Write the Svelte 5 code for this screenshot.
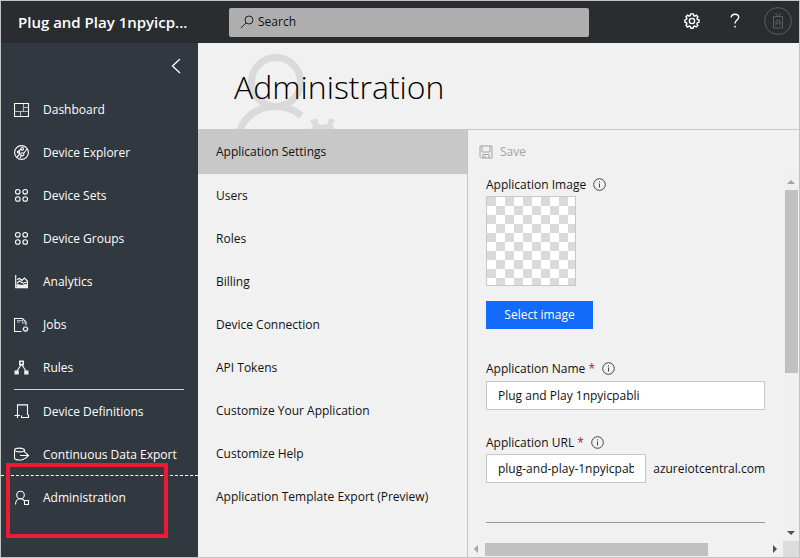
<script>
  const primary = ['Dashboard', 'Device Explorer', 'Device Sets', 'Device Groups', 'Analytics', 'Jobs', 'Rules'];
  const secondary = ['Device Definitions', 'Continuous Data Export', 'Administration'];
  const sections = [
    'Application Settings',
    'Users',
    'Roles',
    'Billing',
    'Device Connection',
    'API Tokens',
    'Customize Your Application',
    'Customize Help',
    'Application Template Export (Preview)'
  ];
  let current = $state('Application Settings');
  let appName = $state('Plug and Play 1npyicpabli');
  let appUrl = $state('plug-and-play-1npyicpabli');
</script>

{#snippet info(label)}
  <svg class="info" viewBox="0 0 13 13" role="img" aria-label={label}>
    <circle cx="6.5" cy="6.5" r="5.8" />
    <path d="M6.5 5.5V9.5M6.5 3.3V4.4" />
  </svg>
{/snippet}

{#snippet glyph(name)}
  <svg class="glyph" viewBox="0 0 16 16" aria-hidden="true">
    {#if name === 'Dashboard'}
      <path class="dim" d="M.5 9.5h14M9.5 1.5v8M9.5 5.5h5M6.5 9.5v5" />
      <path d="M.5 1.5h14v13h-14z" />
    {:else if name === 'Device Explorer'}
      <circle cx="7.5" cy="7.5" r="6.9" />
      <path d="M3 12 5.5 9.5 5 6l2-2M6 13l1.5-2.5M9.5 8.5 13 4" />
      <circle cx="8.2" cy="3.8" r="1.3" />
      <circle cx="8.3" cy="9.3" r="1.6" />
      <circle cx="4.4" cy="7" r="1" />
    {:else if name === 'Device Sets' || name === 'Device Groups'}
      <circle cx="3.8" cy="3.8" r="2.3" />
      <circle cx="11.2" cy="3.8" r="2.3" />
      <circle cx="3.8" cy="11" r="2.3" />
      <circle cx="11.2" cy="11" r="2.3" />
    {:else if name === 'Analytics'}
      <path d="M1.7 1v12.8H14" />
      <path class="fill" d="M2.500 9.500 5 10.500l3 .6 3-1 3 .3V14H2.500z" />
      <path d="M3 5.5 5.5 4.5 8 6.5 10.5 4 13.4 7V11M3 9l2.5-2L9 9.2 13 8" />
    {:else if name === 'Jobs'}
      <path d="M7.5 14.5h-7v-13h8l3.5 3.5v3" />
      <path class="dim" d="M3 3.5h5.5v2.5h3M3 5h3" />
      <circle cx="11.5" cy="12" r="2" />
      <path class="dim" d="M11.5 8.8v1M11.5 14.2v1M8.3 12h1M13.7 12h1M9.3 9.8l.7.7M13 13.500l.7.7M13.700 9.800l-.7.7M9.300 14.200l.7-.7" />
    {:else if name === 'Rules'}
      <path d="M7 5 3 11M8 5l4 6" />
      <path class="fill" fill-rule="evenodd" d="M5 .5h5v5H5zM6.700 2v2h1.700V2z" />
      <path class="fill" d="M.5 10.500h4.300v4H.5zM10.200 10.500h4.300v4h-4.300z" />
    {:else if name === 'Device Definitions'}
      <path d="M3.500 8.500V.9h10v10M3.500 8.500v5.500M.5 11.500h5.500M7 13.500h7.500v-3M7.500 13.500v-2" />
    {:else if name === 'Continuous Data Export'}
      <ellipse cx="5.500" cy="3" rx="5" ry="1.900" />
      <path d="M.5 3v8c0 1.200 2.200 2 5 2s5-.8 5-2M10.500 3v2.500M6 8.500h8.500M11.200 5.300l3.300 3.200-3.300 3.200" />
    {:else}
      <circle cx="6.500" cy="5" r="3.800" />
      <path d="M1.500 14.500c0-3.200 2-5.700 5-5.700 1.800 0 3 .8 3.900 2.100" />
      <path d="M10.500 10.500h4v4h-4z" />
    {/if}
  </svg>
{/snippet}

<div class="app">
  <header class="topbar">
    <div class="brand">Plug and Play 1npyicp...</div>
    <div class="search">
      <svg viewBox="0 0 14 14" aria-hidden="true"><circle cx="9" cy="5" r="4" /><path d="M6 8 .8 13" /></svg>
      <input type="text" placeholder="Search" aria-label="Search" />
    </div>
    <div class="tools">
      <button aria-label="Settings">
        <svg class="gear" viewBox="0 0 16 16">
          <path d="M6.700.9h2.600l.4 1.800 1.100.5 1.600-1 1.500 1.600-1 1.600.5 1.100 1.600.4v2.300l-1.600.5-.5 1.200.9 1.600-1.600 1.500-1.600-.9-1.100.5-.4 1.700H6.800l-.5-1.700-1.200-.5-1.600 1-1.500-1.600.9-1.600-.5-1.200-1.500-.4V6.900l1.500-.5.5-1.100-.9-1.600 1.500-1.600 1.600 1 1.200-.5z" />
          <circle cx="8" cy="8" r="2.600" />
        </svg>
      </button>
      <button aria-label="Help">
        <svg class="help" viewBox="0 0 12 16"><path d="M2.200 4.500C2.200 2.500 3.800 1.200 6 1.200s3.700 1.200 3.700 3.100C9.700 7.200 6 7 6 10.500M6 12.700V14.600" /></svg>
      </button>
      <button class="avatar" aria-label="Account">
        <svg viewBox="0 0 28 28">
          <circle cx="14" cy="14" r="13.400" />
          <path d="M9.500 9.500h9v11.500h-9zM11.500 6l2.500 4M16.500 6 14 10M12 18.500v-4.500l1-1h2l1 1v4.500M12 16h4" />
        </svg>
      </button>
    </div>
  </header>

  <div class="body">
    <nav class="sidebar" aria-label="Main">
      <button class="collapse" aria-label="Collapse menu">
        <svg viewBox="0 0 10 16"><path d="M9 1 1.500 8 9 15" /></svg>
      </button>
      <ul class="primary">
        {#each primary as item}
          <li><a href="#main">{@render glyph(item)}{item}</a></li>
        {/each}
      </ul>
      <ul class="secondary">
        {#each secondary as item}
          <li class:focused={item === 'Administration'}><a href="#main">{@render glyph(item)}{item}</a></li>
        {/each}
      </ul>
      <div class="callout"></div>
    </nav>

    <main id="main">
      <div class="title">
        <svg class="backdrop" viewBox="0 0 110 76" aria-hidden="true">
          <circle cx="48" cy="29" r="24.500" />
          <path d="M11.500 79C16 63 30 53.500 48 53.500c10 0 18 3 25.500 9" />
          <path class="cog" d="M82 67.500 88.700 65.300 91.300 72 99.300 71.300 101.300 65.300 107 67 104.300 72 107 76H82.700L85.300 73z" />
        </svg>
        <h1>Administration</h1>
      </div>
      <div class="columns">
        <ul class="sections">
          {#each sections as section}
            <li class:active={section === current}>
              <a href="#settings" onclick={() => (current = section)}>{section}</a>
            </li>
          {/each}
        </ul>
        <section class="panel" id="settings">
          <button class="save" disabled>
            <svg viewBox="0 0 14 14"><path d="M1 1h12v12H2.500L1 11.500zM3 1v6h8V1M4 13V9.500h6V13M6 11v2" /></svg>
            Save
          </button>
          <div class="scroller">
            <form onsubmit={(e) => e.preventDefault()}>
              <div class="label">Application Image {@render info('About the image')}</div>
              <div class="preview"></div>
              <button class="select">Select image</button>
              <div class="label"><label for="name">Application Name <b>*</b></label>{@render info('About the name')}</div>
              <input id="name" type="text" bind:value={appName} />
              <div class="label"><label for="url">Application URL <b>*</b></label>{@render info('About the URL')}</div>
              <div class="url"><input id="url" type="text" bind:value={appUrl} /><span>azureiotcentral.com</span></div>
              <hr />
            </form>
            <div class="vbar" aria-hidden="true"><i class="up"></i><div></div><i class="down"></i></div>
            <div class="hbar" aria-hidden="true"><i class="left"></i><div></div><i class="right"></i></div>
            <div class="corner"></div>
          </div>
        </section>
      </div>
    </main>
  </div>
</div>

<style>
  :global(body) { margin: 0; }
  .app, .app * { box-sizing: border-box; }
  .app {
    display: flex;
    flex-direction: column;
    min-height: 100vh;
    border: 1px solid #c3c3c3;
    background: #f1f1f1;
    color: #111;
    font: 12px/20px "Open Sans", "Noto Sans", sans-serif;
  }
  button, input { font: inherit; color: inherit; }
  button { border: 0; background: none; padding: 0; }
  a { color: inherit; text-decoration: none; }
  ul { list-style: none; margin: 0; padding: 0; }
  svg { fill: none; stroke: currentColor; stroke-width: 1; flex: none; display: block; }

  .topbar { display: flex; align-items: center; height: 42px; background: #292d30; color: #fff; }
  .brand { width: 228px; padding-left: 17px; font-size: 15px; font-weight: 600; white-space: nowrap; }
  .search {
    flex: 0 1 360px;
    height: 29px;
    display: flex;
    align-items: center;
    gap: 4px;
    padding-left: 11px;
    border-radius: 2px;
    background: #aeaeae;
    color: #222;
  }
  .search svg { width: 14px; height: 14px; }
  .search input { flex: 1; min-width: 0; border: 0; padding: 0; background: none; outline: 0; }
  .search input::placeholder { color: #111; opacity: 1; }
  .tools { display: flex; align-items: center; gap: 15px; margin-left: auto; padding: 0 7px 3px 0; }
  .tools button { display: flex; justify-content: center; width: 28px; }
  .gear { width: 16px; height: 16px; stroke-width: 1.4; }
  .help { width: 12px; height: 16px; stroke-width: 1.4; }
  .tools .avatar { color: #5b5e61; }
  .avatar svg { width: 28px; height: 28px; }

  .body { flex: 1; display: flex; }
  .sidebar { position: relative; flex: none; width: 197px; background: #32383f; color: #fff; }
  .collapse { display: block; height: 45px; margin-left: auto; padding-right: 17px; }
  .collapse svg { width: 10px; height: 16px; stroke-width: 1.3; }
  .sidebar a { display: flex; align-items: center; gap: 13px; height: 43px; padding-left: 13px; white-space: nowrap; }
  .glyph { width: 16px; height: 16px; stroke: #fff; stroke-width: 1.1; }
  .glyph .dim { stroke: #b4b8bd; }
  .glyph .fill { fill: #eee; stroke: none; }
  .secondary::before { content: ""; display: block; height: 1px; margin: 0 14px 0 13px; background: #d0d0d0; }
  .focused { border-top: 1px dashed #fff; margin-top: -1px; }
  .callout { position: absolute; left: 5px; top: 420px; width: 162px; height: 75px; border: 4px solid #e91c33; }

  main { flex: 1; min-width: 0; display: flex; flex-direction: column; }
  .title { position: relative; height: 87px; border-bottom: 1px solid #c8c8c8; overflow: hidden; }
  .backdrop { position: absolute; left: 30px; top: 10px; width: 110px; height: 76px; stroke: #dadada; stroke-width: 7; }
  .cog { fill: #dadada; stroke: none; }
  h1 { position: relative; margin: 0; padding: 21px 0 0 36px; font-size: 32px; line-height: 46px; font-weight: 300; color: #000; }
  .columns { flex: 1; display: flex; }
  .sections { flex: none; width: 270px; border-right: 1px solid #c3c3c3; }
  .sections a { display: flex; align-items: center; height: 43px; padding-left: 18px; }
  .sections .active a { height: 44px; }
  .active { background: #c8c8c8; }

  .panel { flex: 1; min-width: 0; display: flex; flex-direction: column; }
  .save { display: flex; align-items: center; gap: 7px; height: 44px; padding-left: 11px; color: #a3a3a3; }
  .save svg { width: 14px; height: 14px; }
  .scroller { flex: 1; display: grid; grid-template: 1fr 16px / minmax(0, 1fr) 16px; }
  form { padding-left: 18px; padding-right: 18px; }
  .label { display: flex; align-items: center; gap: 7px; height: 21px; }
  .label b { color: #a4262c; font-weight: 400; }
  .info { width: 13px; height: 13px; stroke: #444; }
  .preview {
    width: 90px;
    height: 90px;
    margin-top: 1px;
    border: 1px solid #c8c8c8;
    background: repeating-conic-gradient(#fff 0 25%, #dadada 0 50%) 0 0 / 18px 18px;
  }
  .select { display: block; width: 107px; height: 28px; margin: 15px 0 29px; background: #136bfb; color: #fff; }
  form input { display: block; width: 100%; height: 29px; padding: 0 11px; border: 1px solid #c8c8c8; background: #fff; }
  #name { margin: 2px 0 22px; }
  .url { display: flex; align-items: center; gap: 7px; margin: 1px 0 39px; }
  .url input { flex: 1; min-width: 0; }
  hr { border: 0; border-top: 1px solid #999; margin: 0; }

  .vbar { display: flex; flex-direction: column; align-items: center; padding: 6px 0; background: #f0f0f0; }
  .vbar div { width: 13px; height: 183px; margin: 6px 0 auto; background: #c1c1c1; }
  .hbar { display: flex; align-items: center; padding: 0 6px; }
  .hbar div { width: 223px; height: 13px; margin: 0 auto 0 7px; background: #c1c1c1; }
  .corner { background: #dcdcdc; }
  i { border: 4px solid transparent; }
  .up { border-top: 0; border-bottom-color: #a3a3a3; }
  .down { border-bottom: 0; border-top-color: #505050; }
  .left { border-left: 0; border-right-color: #a3a3a3; }
  .right { border-right: 0; border-left-color: #505050; }
</style>
